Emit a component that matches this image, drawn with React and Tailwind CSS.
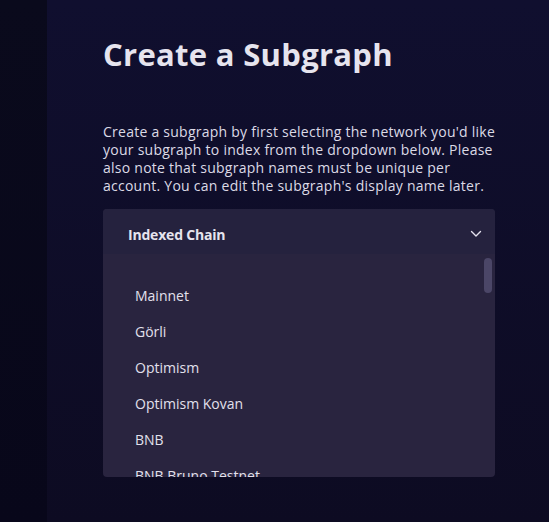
import React from 'react';

const chains = ['Mainnet', 'Görli', 'Optimism', 'Optimism Kovan', 'BNB', 'BNB Bruno Testnet'];

function ChevronDown() {
  return (
    <svg width="12" height="8" viewBox="0 0 12 8" fill="none">
      <path d="M1.5 1.5 6 6l4.5-4.5" stroke="#e4e2ee" strokeWidth="1.4" strokeLinecap="round" strokeLinejoin="round" />
    </svg>
  );
}

export default function App() {
  return (
    <div
      className="flex h-[522px] w-[549px] overflow-hidden bg-[#0e0c25] text-[#e8e6f0]"
      style={{ fontFamily: '"Open Sans", "Noto Sans", sans-serif' }}
    >
      <div className="w-[47px] shrink-0 bg-gradient-to-b from-[#0a0a1c] to-[#08071a]" />
      <div className="flex-1 bg-gradient-to-b from-[#100f2f] to-[#0d0b22] pl-[56px]">
        <h1 className="mt-[34px] text-[31px] font-bold leading-[40px] tracking-[0.3px] text-[#e6e4ee]">
          Create a Subgraph
        </h1>
        <p className="mt-[49px] w-[395px] text-[14px] leading-[18px] tracking-[0.25px] text-[#dcdae6]">
          Create a subgraph by first selecting the network you'd like your subgraph to index from the dropdown below. Please also note that subgraph names must be unique per account. You can edit the subgraph's display name later.
        </p>
        <div className="mt-[14px] w-[392px] overflow-hidden rounded-[4px] bg-[#29243f]">
          <div className="flex h-[45px] items-center justify-between bg-[#25223e] pl-[25px] pr-[13px] pt-[5px]">
            <span className="text-[14px] font-bold tracking-[-0.2px] text-[#e6e4ee]">Indexed Chain</span>
            <ChevronDown />
          </div>
          <div className="relative h-[223px] overflow-hidden pt-[23px]">
            <div className="absolute right-[3px] top-[4px] h-[35px] w-[8px] rounded-full bg-[#4b4667]" />
            {chains.map((c) => (
              <div key={c} className="flex h-[36px] items-center pl-[32px] text-[14px] text-[#e2e0ec]">
                {c}
              </div>
            ))}
          </div>
        </div>
      </div>
    </div>
  );
}
